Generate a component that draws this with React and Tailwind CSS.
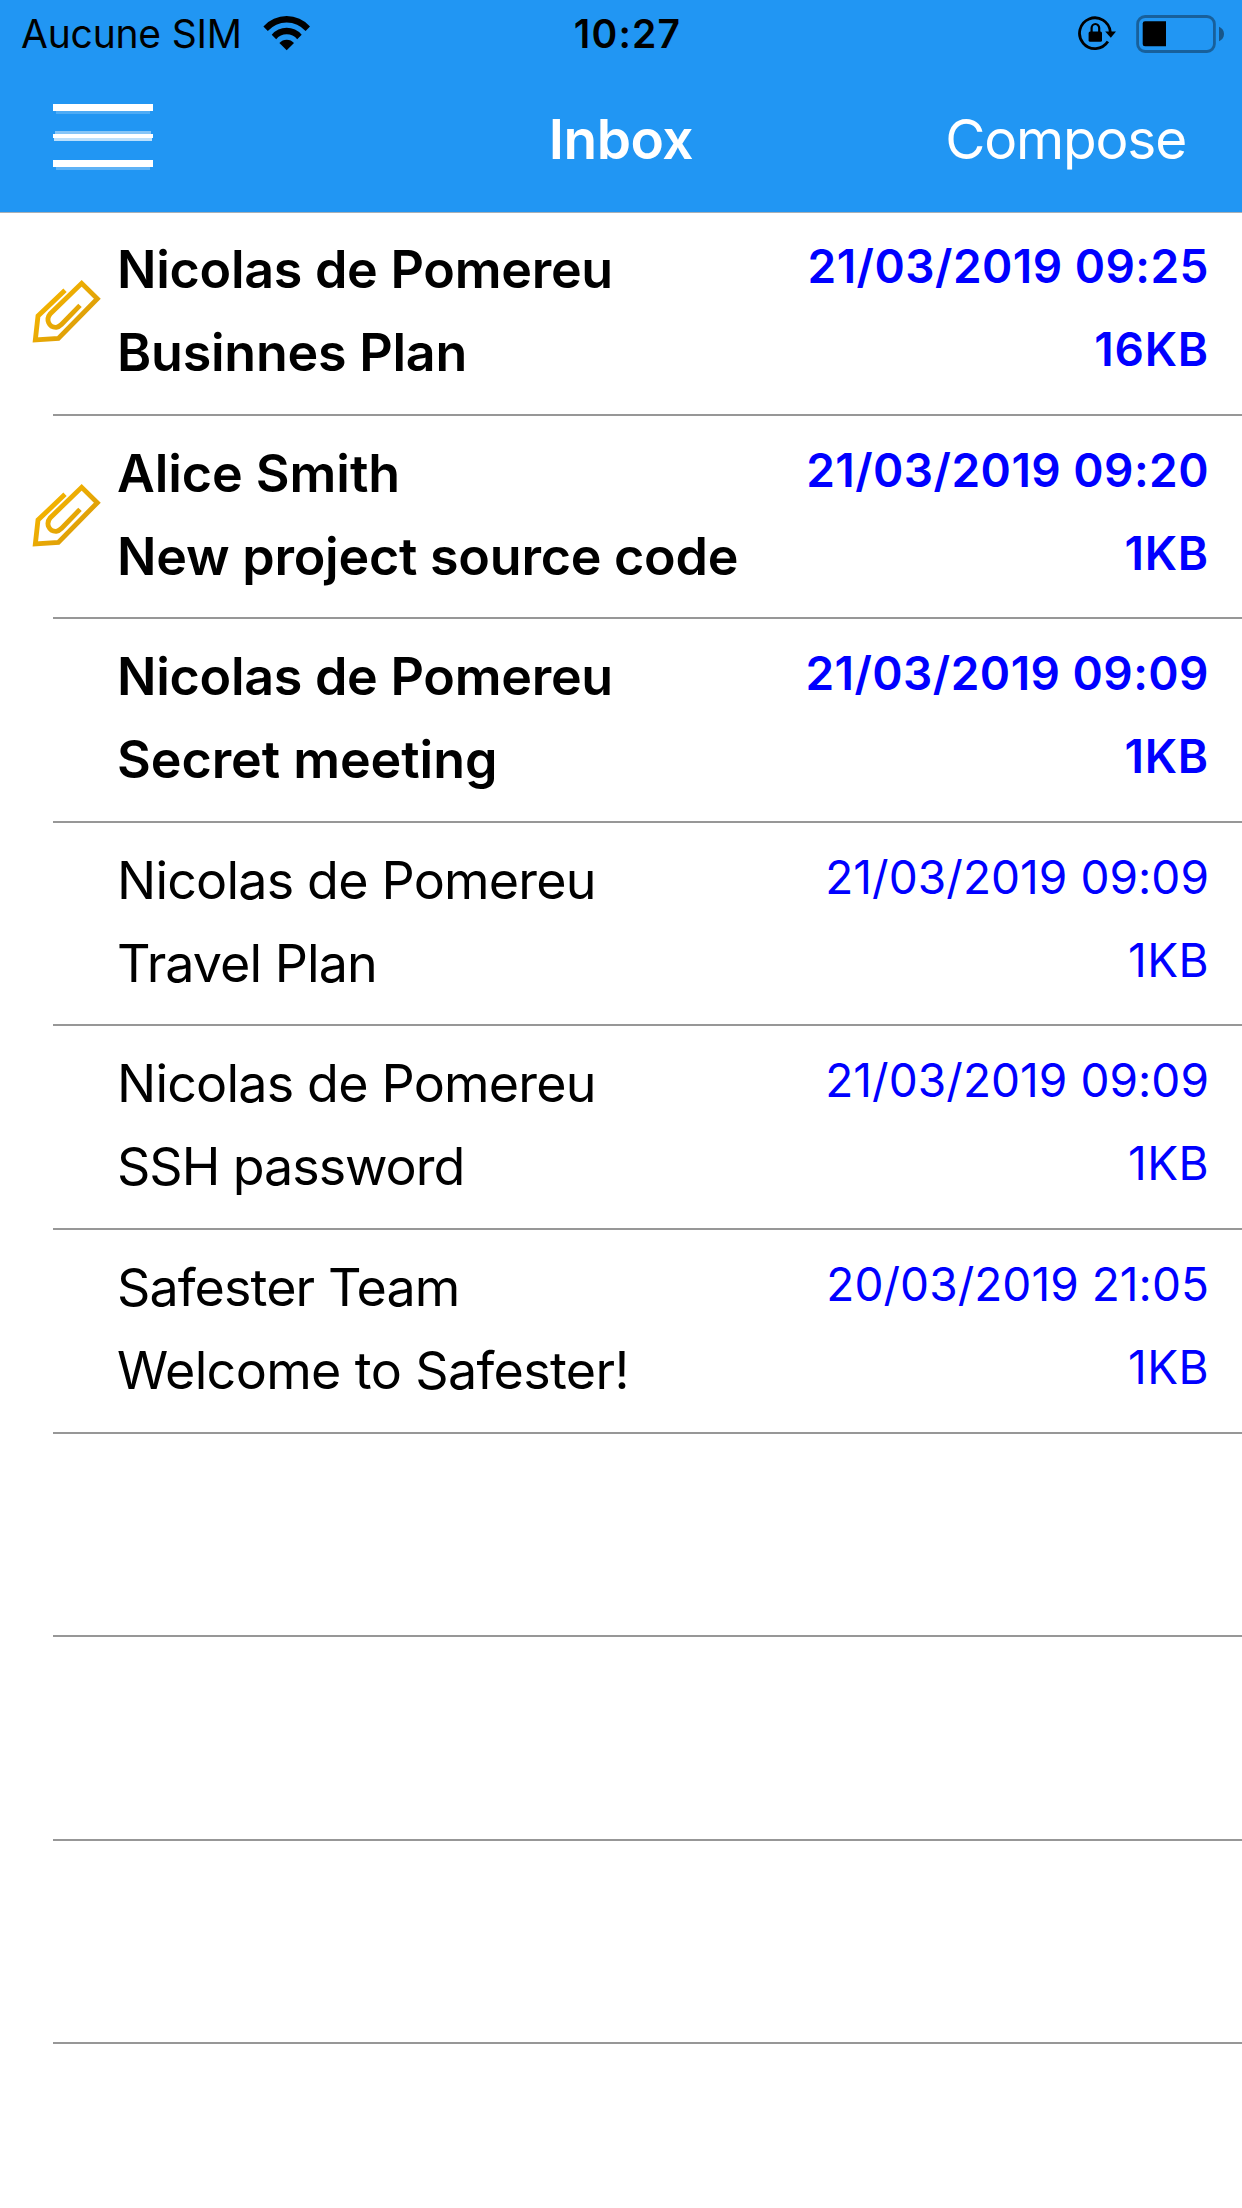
const messages = [
  { from: "Nicolas de Pomereu", subject: "Businnes Plan", date: "21/03/2019 09:25", size: "16KB", unread: true, clip: true, fromLs: "tracking-[-0.28px]", subjectLs: "tracking-[-0.24px]" },
  { from: "Alice Smith", subject: "New project source code", date: "21/03/2019 09:20", size: "1KB", unread: true, clip: true, fromLs: "tracking-[-0.06px]", subjectLs: "tracking-[-0.24px]" },
  { from: "Nicolas de Pomereu", subject: "Secret meeting", date: "21/03/2019 09:09", size: "1KB", unread: true, fromLs: "tracking-[-0.28px]", subjectLs: "tracking-[-0.06px]" },
  { from: "Nicolas de Pomereu", subject: "Travel Plan", date: "21/03/2019 09:09", size: "1KB", fromLs: "tracking-[-0.8px]", subjectLs: "tracking-[-0.95px]" },
  { from: "Nicolas de Pomereu", subject: "SSH password", date: "21/03/2019 09:09", size: "1KB", fromLs: "tracking-[-0.8px]", subjectLs: "tracking-[-1.05px]" },
  { from: "Safester Team", subject: "Welcome to Safester!", date: "20/03/2019 21:05", size: "1KB", fromLs: "tracking-[-0.9px]", subjectLs: "tracking-[-0.64px]" },
];

const emptyRows = [0, 1, 2];

function WifiIcon() {
  return (
    <svg className="w-[48px] h-[36px]" viewBox="0 0 48 36" fill="black">
      <path d="M0.4 10.4A31.5 31.5 0 0 1 47 10.4L42.6 15A25.2 25.2 0 0 0 4.8 15Z" />
      <path d="M8.7 18.7A19.6 19.6 0 0 1 38.7 18.7L34.2 23.2A13.4 13.4 0 0 0 13.2 23.2Z" />
      <path d="M16.4 27A9.6 9.6 0 0 1 31 27L23.7 34.2Z" />
    </svg>
  );
}

function RotationLockIcon() {
  return (
    <svg className="w-[40px] h-[36px]" viewBox="0 0 40 36" fill="none">
      <path d="M34.3 16A15.4 15.4 0 1 0 31.9 25.6" stroke="black" strokeWidth="2.8" />
      <path d="M29.2 15.6H40L34.8 21.8Z" fill="black" />
      <rect x="12.6" y="15.4" width="13.4" height="10.4" rx="1.5" fill="black" />
      <path d="M15.6 16V12A3.8 4 0 0 1 23.2 12V16" stroke="black" strokeWidth="2.2" />
    </svg>
  );
}

function BatteryIcon() {
  return (
    <svg className="w-[90px] h-[38px]" viewBox="0 0 90 38" fill="none">
      <rect x="1.6" y="1.5" width="76.8" height="35" rx="7.5" stroke="#18609B" strokeWidth="2.8" />
      <path d="M83 11.8C86 13 88 15.5 88 19C88 22.5 86 25 83 26.2Z" fill="#18568A" />
      <path d="M9 6.3H30V31.3H9Q6.7 31.3 6.7 29V8.6Q6.7 6.3 9 6.3Z" fill="black" />
    </svg>
  );
}

function MenuIcon() {
  return (
    <svg className="w-[100px] h-[66px]" viewBox="0 0 100 66" fill="white">
      <rect y="0" width="100" height="7" />
      <rect x="3" y="7" width="94" height="3" opacity="0.2" />
      <rect x="2" y="27" width="96" height="3" opacity="0.45" />
      <rect y="30" width="100" height="4" />
      <rect x="1" y="34" width="98" height="3" opacity="0.7" />
      <rect y="56" width="100" height="7" />
      <rect x="3" y="63" width="94" height="3" opacity="0.27" />
    </svg>
  );
}

function PaperclipIcon() {
  return (
    <svg className="w-[90px] h-[90px]" viewBox="0 0 270 270" fill="none">
      <defs>
        <linearGradient id="clip" x1="80" y1="80" x2="170" y2="170" gradientUnits="userSpaceOnUse">
          <stop offset="0" stopColor="#F4B400" />
          <stop offset="1" stopColor="#DFA008" />
        </linearGradient>
      </defs>
      <path
        d="M135 61L54 138L46 210L115 205L232 86L185 40L91 131C76 149 87 173 109 172C116 171 120 168 125 163L180 106"
        stroke="url(#clip)"
        strokeWidth="14.5"
      />
    </svg>
  );
}

function MessageRow({ message }) {
  const { unread } = message;
  return (
    <li className={unread ? "flex h-[203.6px] font-semibold" : "flex h-[203.6px] font-normal"}>
      <div className="w-[53px] shrink-0 pt-[58px] pl-[20px]">{message.clip && <PaperclipIcon />}</div>
      <div className="flex flex-1 justify-between border-b-2 border-[#979797] pl-[64px] pr-[33px]">
        <div className="pt-[16px] text-[52px] leading-[83px] whitespace-nowrap text-black">
          <p className={message.fromLs}>{message.from}</p>
          <p className={message.subjectLs}>{message.subject}</p>
        </div>
        <div className="pt-[13px] text-right text-[46px] leading-[83px] whitespace-nowrap text-[#0000FF]">
          <p className={unread ? "tracking-[0.46px]" : "tracking-[0.05px]"}>{message.date}</p>
          <p className={unread ? "tracking-[0.8px]" : "tracking-[0.4px]"}>{message.size}</p>
        </div>
      </div>
    </li>
  );
}

export default function App() {
  return (
    <div className="h-[2208px] w-[1242px] overflow-hidden bg-white font-['Inter',sans-serif]">
      <header className="h-[213px] border-b border-[#A9B0B6] bg-[#2196F3]">
        <div className="grid h-[68px] grid-cols-3 items-center text-[39px] leading-[68px] text-black">
          <div className="flex items-center gap-[21px] pl-[21px]">
            <span className="tracking-[-0.2px]">Aucune SIM</span>
            <WifiIcon />
          </div>
          <div className="pl-[13px] text-center font-semibold tracking-[1.2px]">10:27</div>
          <div className="flex items-center justify-end gap-[20px] pr-[16px]">
            <RotationLockIcon />
            <BatteryIcon />
          </div>
        </div>
        <div className="grid h-[142px] grid-cols-3 items-center text-[55px] text-white">
          <div className="pb-[4px] pl-[53px]">
            <MenuIcon />
          </div>
          <h1 className="text-center font-semibold tracking-[-0.5px]">Inbox</h1>
          <div className="pr-[56px] text-right tracking-[-1.2px]">Compose</div>
        </div>
      </header>
      <ul className="-mt-px">
        {messages.map((message, i) => (
          <MessageRow key={i} message={message} />
        ))}
        {emptyRows.map((row) => (
          <li key={row} className="flex h-[203.6px] pl-[53px]">
            <div className="flex-1 border-b-2 border-[#979797]" />
          </li>
        ))}
      </ul>
    </div>
  );
}
